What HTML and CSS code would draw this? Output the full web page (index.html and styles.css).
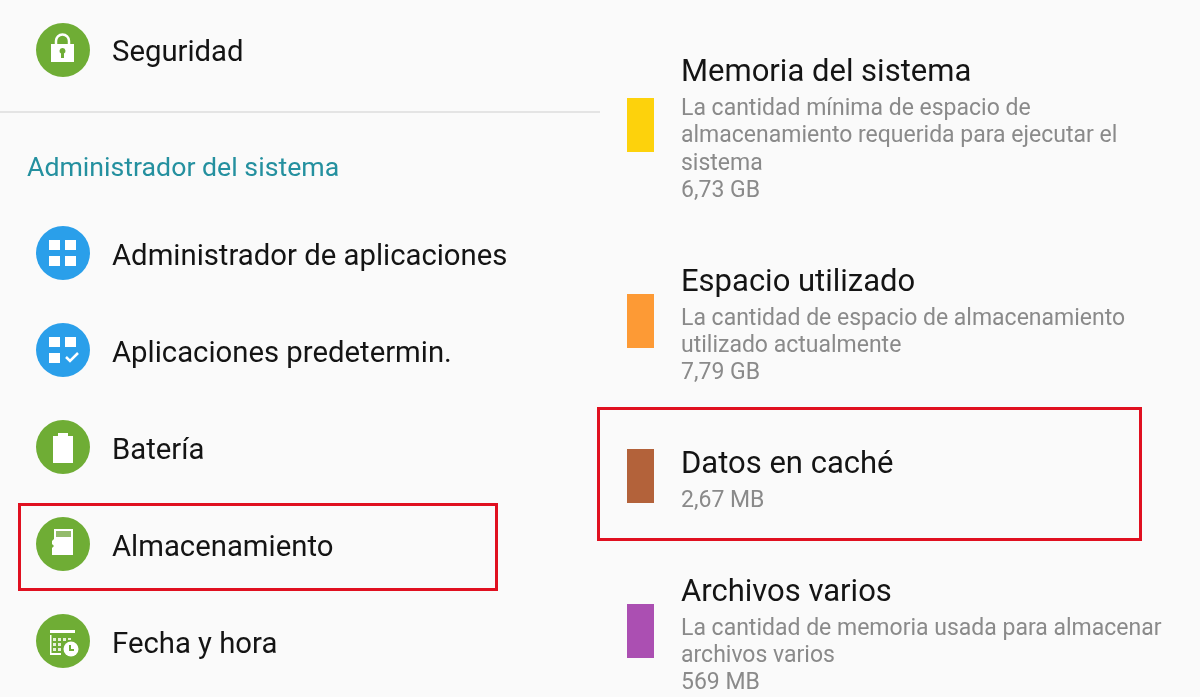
FILE: index.html
```html
<!DOCTYPE html>
<html lang="es">
<head>
<meta charset="utf-8">
<title>Ajustes</title>
<link rel="stylesheet" href="styles.css">
</head>
<body>
<main class="screen">
  <section class="pane pane-left">
    <div class="row row-first">
      <span class="badge green"><svg viewBox="0 0 54 54"><path fill="none" stroke="#fff" stroke-width="2.500" d="M20 21v-3a6.500 6.500 0 0 1 13 0v3"/><path fill="#fff" fill-rule="evenodd" d="M15 21h23v18H15zM26.500 25a3 3 0 0 0-1.500 5.600V35h3v-4.400A3 3 0 0 0 26.500 25z"/></svg></span>
      <span class="label">Seguridad</span>
    </div>
    <hr class="divider">
    <h2 class="section">Administrador del sistema</h2>
    <div class="row">
      <span class="badge blue"><svg viewBox="0 0 54 54"><path fill="#fff" d="M13 14h11v10H13zM29 14h11v10H29zM13 30h11v10H13zM29 30h11v10H29z"/></svg></span>
      <span class="label">Administrador de aplicaciones</span>
    </div>
    <div class="row">
      <span class="badge blue"><svg viewBox="0 0 54 54"><path fill="#fff" d="M13 14h11v10H13zM29 14h11v10H29zM13 30h11v10H13z"/><path fill="none" stroke="#fff" stroke-width="2.500" d="M30 34l4 4 8-8"/></svg></span>
      <span class="label">Aplicaciones predetermin.</span>
    </div>
    <div class="row">
      <span class="badge green"><svg viewBox="0 0 54 54"><path fill="#fff" d="M22 13h10v3h5v27H17V16h5z"/></svg></span>
      <span class="label">Batería</span>
    </div>
    <div class="row">
      <span class="badge green"><svg viewBox="0 0 54 54"><path fill="#fff" d="M18 12h19v26H16v-7l2-2-2-2v-3l2-2z"/><path fill="#93bb6c" d="M20 14h15v6H20z"/></svg></span>
      <span class="label">Almacenamiento</span>
    </div>
    <div class="row">
      <span class="badge green"><svg viewBox="0 0 54 54"><path fill="#fff" d="M14 16h25v3H14zM14 21h1.500v20H14zM15 39h10v2H15z"/><path fill="#e6f0da" d="M17 24h3v3h-3zM22 24h3v3h-3zM27 24h3v3h-3zM32 24h3v2h-3zM17 29h3v3h-3zM22 29h3v3h-3zM17 34h3v3h-3zM22 34h3v3h-3z"/><circle cx="35" cy="35" r="7.500" fill="#fff"/><path fill="none" stroke="#6fad35" stroke-width="2" d="M34 31v5h4"/></svg></span>
      <span class="label">Fecha y hora</span>
    </div>
  </section>
  <section class="pane pane-right">
    <div class="item">
      <span class="swatch yellow"></span>
      <div class="info">
        <div class="title">Memoria del sistema</div>
        <p class="desc">La cantidad mínima de espacio de almacenamiento requerida para ejecutar el sistema</p>
        <p class="desc">6,73 GB</p>
      </div>
    </div>
    <div class="item">
      <span class="swatch orange"></span>
      <div class="info">
        <div class="title">Espacio utilizado</div>
        <p class="desc">La cantidad de espacio de almacenamiento utilizado actualmente</p>
        <p class="desc">7,79 GB</p>
      </div>
    </div>
    <div class="item">
      <span class="swatch brown"></span>
      <div class="info">
        <div class="title">Datos en caché</div>
        <p class="desc">2,67 MB</p>
      </div>
    </div>
    <div class="item">
      <span class="swatch purple"></span>
      <div class="info">
        <div class="title">Archivos varios</div>
        <p class="desc">La cantidad de memoria usada para almacenar archivos varios</p>
        <p class="desc">569 MB</p>
      </div>
    </div>
  </section>
  <div class="mark mark-left"></div>
  <div class="mark mark-right"></div>
</main>
</body>
</html>
```

FILE: styles.css
```css
* { box-sizing: border-box; }
html, body { margin: 0; padding: 0; height: 697px; overflow: hidden; background: #fafafa; }
.screen {
  position: relative;
  display: flex;
  width: 1200px;
  height: 697px;
  overflow: hidden;
  font-family: Roboto, "Liberation Sans", sans-serif;
  color: #141414;
  filter: blur(0.45px);
}
.pane { width: 600px; flex: none; }
.pane-left { padding-top: 1px; }
.row {
  display: flex;
  align-items: center;
  gap: 22px;
  height: 97px;
  padding-left: 36px;
}
.row-first { height: 98px; }
.badge {
  width: 54px;
  height: 54px;
  border-radius: 50%;
  flex: none;
}
.badge svg { display: block; width: 54px; height: 54px; }
.green { background: #6fad35; }
.blue { background: #2a9fea; }
.label {
  margin-top: 4px;
  font-size: 29.300px;
  line-height: 34px;
}
.row-first .label { margin-top: 2px; }
.divider {
  margin: 12px 0 0;
  border: 0;
  height: 2px;
  background: #e4e4e4;
}
.section {
  margin: 39px 0 22px 27px;
  font-size: 26.700px;
  line-height: 30px;
  font-weight: 400;
  color: #24909f;
}
.pane-right {
  display: flex;
  flex-direction: column;
  gap: 60.500px;
  padding-left: 27px;
  padding-top: 54px;
}
.item { display: flex; align-items: center; gap: 27px; }
.swatch { width: 27px; height: 54px; flex: none; margin-bottom: 7px; }
.yellow { background: #fdd20c; }
.orange { background: #fd9a35; }
.brown { background: #b3623a; }
.purple { background: #ab4fb2; }
.info { width: 500px; flex: none; }
.title {
  margin-bottom: 6px;
  font-size: 31px;
  line-height: 34px;
}
.desc {
  margin: 0;
  font-size: 23px;
  line-height: 27.300px;
  color: #8a8a8a;
}
.mark { position: absolute; border: 3px solid #e01020; }
.mark-left { left: 18px; top: 503px; width: 480px; height: 88px; }
.mark-right { left: 597px; top: 407px; width: 545px; height: 134px; }
```
